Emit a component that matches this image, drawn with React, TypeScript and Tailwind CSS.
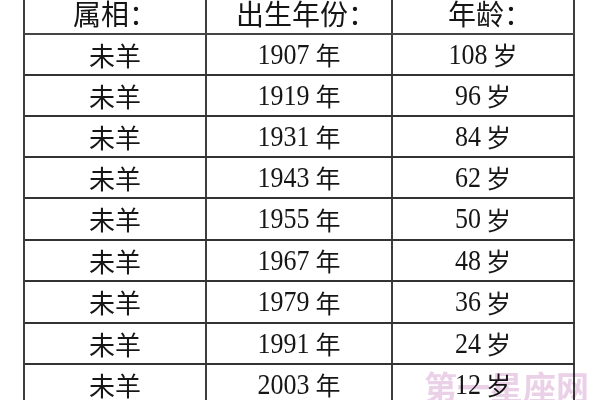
const rows = [
  { year: "1907", age: "108", h: "h-[41px]" },
  { year: "1919", age: "96", h: "h-[41px]" },
  { year: "1931", age: "84", h: "h-[41px]" },
  { year: "1943", age: "62", h: "h-[41px]" },
  { year: "1955", age: "50", h: "h-[42px]" },
  { year: "1967", age: "48", h: "h-[41px]" },
  { year: "1979", age: "36", h: "h-[42px]" },
  { year: "1991", age: "24", h: "h-[41px]" },
  { year: "2003", age: "12", h: "h-[41px]" },
];

const cjk = "font-['Noto_Sans_CJK_SC',sans-serif]";
const num = "font-['Liberation_Serif','Noto_Sans_CJK_SC',serif]";

const App = () => {
  return (
    <div className="relative w-[600px] h-[400px] overflow-hidden bg-white text-[#161616]">
      <div className="ml-[23px] w-[552px] border-l-2 border-[#3d3d3d]">
        {/* header */}
        <div className="flex h-[35px] border-b-2 border-[#454545]">
          <div className={`w-[182px] border-r-2 border-[#3d3d3d] flex items-end justify-center pb-[6px] text-[28px] leading-[28px] ${cjk}`}>
            属相：
          </div>
          <div className={`w-[186px] border-r-2 border-[#3d3d3d] flex items-end justify-center pb-[6px] pl-[14px] text-[28px] leading-[28px] ${cjk}`}>
            出生年份：
          </div>
          <div className={`w-[182px] border-r-2 border-[#3d3d3d] flex items-end justify-center pb-[6px] pl-[14px] text-[28px] leading-[28px] ${cjk}`}>
            年龄：
          </div>
        </div>

        {rows.map((r) => (
          <div key={r.year} className={`flex ${r.h} border-b-2 border-[#333]`}>
            <div className={`w-[182px] border-r-2 border-[#3d3d3d] flex items-center justify-center text-[26px] leading-none ${cjk}`}>
              未羊
            </div>
            <div className="w-[186px] border-r-2 border-[#3d3d3d] flex items-center justify-center">
              <span className={`text-[26px] leading-none scale-y-[1.15] ${num}`}>{r.year}</span>
              <span className={`ml-[6px] text-[25px] leading-none ${cjk}`}>年</span>
            </div>
            <div className="w-[182px] border-r-2 border-[#3d3d3d] flex items-center justify-center">
              <span className={`text-[26px] leading-none scale-y-[1.15] ${num}`}>{r.age}</span>
              <span className={`ml-[5px] text-[25px] leading-none ${cjk}`}>岁</span>
            </div>
          </div>
        ))}
      </div>

      {/* watermark */}
      <div className={`absolute left-[424px] top-[370px] pointer-events-none whitespace-nowrap text-[33px] font-bold leading-none text-[#e6c6e3] opacity-80 mix-blend-multiply ${cjk}`}>
        第一星座网
      </div>
    </div>
  );
};

export default App;
